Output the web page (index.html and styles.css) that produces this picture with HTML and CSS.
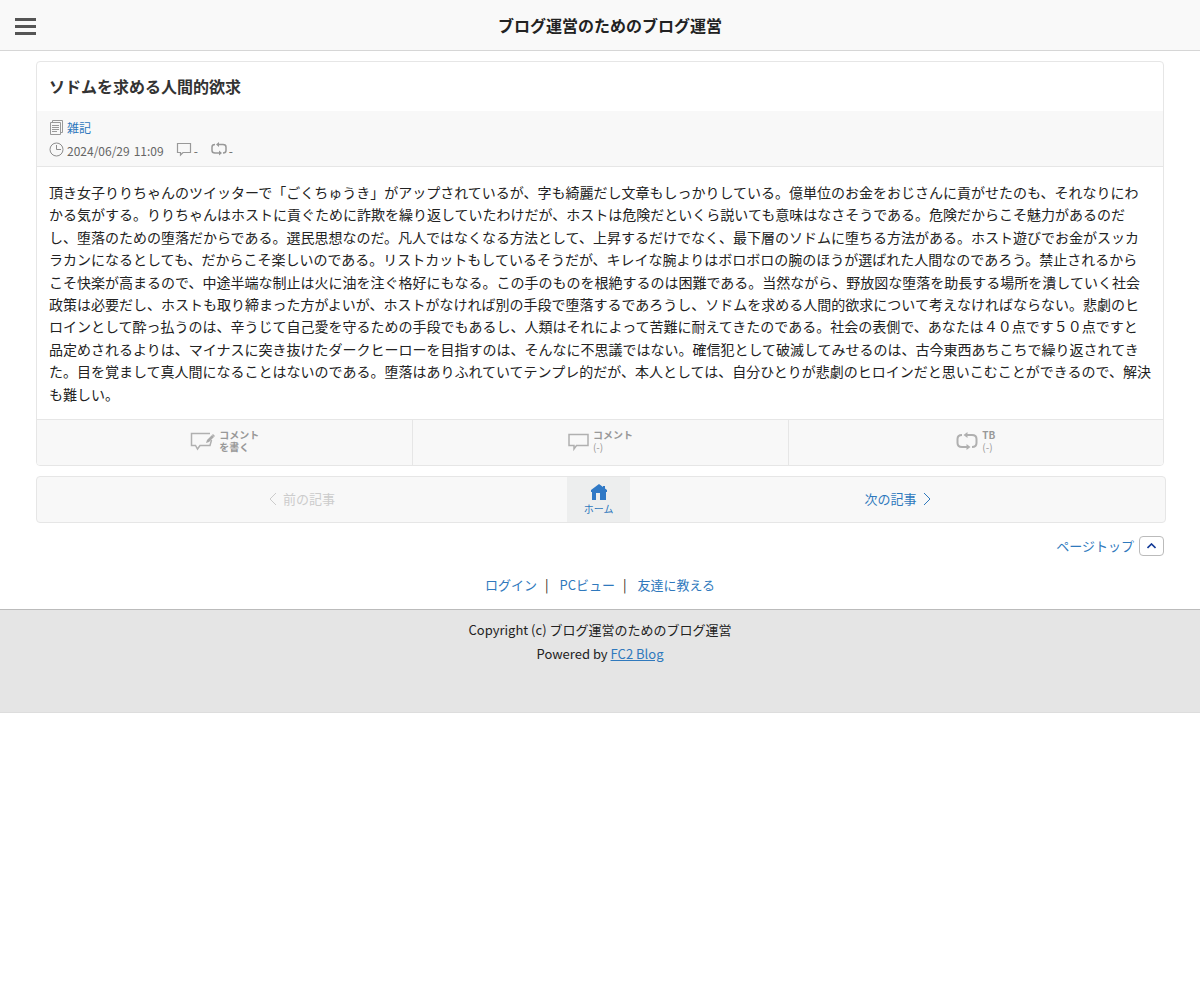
FILE: index.html
```html
<!DOCTYPE html>
<html lang="ja">
<head>
<meta charset="utf-8">
<meta name="viewport" content="width=device-width, initial-scale=1">
<title>ソドムを求める人間的欲求</title>
<link rel="stylesheet" href="styles.css">
</head>
<body id="top">
<header class="site-header">
  <button class="menu-button" type="button" aria-label="メニュー"><span></span><span></span><span></span></button>
  <h1 class="site-title">ブログ運営のためのブログ運営</h1>
</header>
<main class="main">
  <article class="entry">
    <h2 class="entry-title">ソドムを求める人間的欲求</h2>
    <div class="entry-meta">
      <div class="meta-row">
        <svg class="meta-icon" width="15" height="18" viewBox="0 0 15 18" fill="none" stroke="#999"><path d="M3.500 3.500V1.500H13.500V13.500H11.500M1.500 3.500H11.500V15.500H1.500ZM3 6.500H10M3 8.500H10M3 10.500H10M3 12.500H8"/></svg>
        <a href="#category">雑記</a>
      </div>
      <div class="meta-row">
        <svg class="meta-icon" width="15" height="18" viewBox="0 0 15 18" fill="none" stroke="#8c8c8c"><circle cx="7.500" cy="7.500" r="6.500"/><path d="M7.500 3V7.500H12"/></svg>
        <time class="date" datetime="2024-06-29T11:09"><span>2024/06/29</span> <span>11:09</span></time>
        <span class="meta-count"><svg width="16" height="18" viewBox="0 0 16 18" fill="none" stroke="#999" stroke-width="1.200"><path d="M1.500 1.500H14.500V10.500H7L4.500 13V10.500H1.500Z"/></svg>-</span>
        <span class="meta-count"><svg width="16" height="18" viewBox="0 0 16 18" fill="none" stroke="#999" stroke-width="1.500"><path d="M4 2.500Q1 2.500 1 5V8.500Q1 11 4 11H9M12 11Q15 11 15 8.500V5Q15 2.500 12 2.500H7"/><path d="M8 0V5L5 2.500ZM8 8.500V13.500L11 11Z" fill="#999" stroke="none"/></svg>-</span>
      </div>
    </div>
    <div class="entry-body">頂き女子りりちゃんのツイッターで「ごくちゅうき」がアップされているが、字も綺麗だし文章もしっかりしている。億単位のお金をおじさんに貢がせたのも、それなりにわかる気がする。りりちゃんはホストに貢ぐために詐欺を繰り返していたわけだが、ホストは危険だといくら説いても意味はなさそうである。危険だからこそ魅力があるのだし、堕落のための堕落だからである。選民思想なのだ。凡人ではなくなる方法として、上昇するだけでなく、最下層のソドムに堕ちる方法がある。ホスト遊びでお金がスッカラカンになるとしても、だからこそ楽しいのである。リストカットもしているそうだが、キレイな腕よりはボロボロの腕のほうが選ばれた人間なのであろう。禁止されるからこそ快楽が高まるので、中途半端な制止は火に油を注ぐ格好にもなる。この手のものを根絶するのは困難である。当然ながら、野放図な堕落を助長する場所を潰していく社会政策は必要だし、ホストも取り締まった方がよいが、ホストがなければ別の手段で堕落するであろうし、ソドムを求める人間的欲求について考えなければならない。悲劇のヒロインとして酔っ払うのは、辛うじて自己愛を守るための手段でもあるし、人類はそれによって苦難に耐えてきたのである。社会の表側で、あなたは４０点です５０点ですと品定めされるよりは、マイナスに突き抜けたダークヒーローを目指すのは、そんなに不思議ではない。確信犯として破滅してみせるのは、古今東西あちこちで繰り返されてきた。目を覚まして真人間になることはないのである。堕落はありふれていてテンプレ的だが、本人としては、自分ひとりが悲劇のヒロインだと思いこむことができるので、解決も難しい。</div>
    <div class="entry-actions">
      <a href="#comment-form"><svg width="25" height="22" viewBox="0 0 25 22" fill="none" stroke="#b0b0b0" stroke-width="1.500"><path d="M20 3.500H1.500V15.500H5.500L7.500 19L10 15.500H20L21.500 10"/><path d="M16 13L17 10L22 5L24 7L19 12Z" fill="#aaa" stroke="none"/><path d="M22.500 4.500L24.500 6.500"/></svg><span>コメント<br>を書く</span></a>
      <a href="#comments"><svg width="21" height="22" viewBox="0 0 21 22" fill="none" stroke="#b0b0b0" stroke-width="1.500"><path d="M1 4.500H20V15.500H8.500L6 19V15.500H1Z"/></svg><span>コメント<br><span class="count">(-)</span></span></a>
      <a href="#trackbacks"><svg width="22" height="22" viewBox="0 0 22 22" fill="none" stroke="#b0b0b0" stroke-width="2"><path d="M6 5Q1.500 5 1.500 9V13Q1.500 17 6 17H12M16 17Q20.500 17 20.500 13V9Q20.500 5 16 5H10"/><path d="M11.500 2V8L7.500 5ZM10.500 14V20L14.500 17Z" fill="#b0b0b0" stroke="none"/></svg><span>TB<br><span class="count">(-)</span></span></a>
    </div>
  </article>
  <nav class="pager" aria-label="記事">
    <span class="pager-side disabled"><svg width="8" height="14" viewBox="0 0 8 14" fill="none" stroke="currentColor"><path d="M7 1L1 7L7 13"/></svg>前の記事</span>
    <a class="pager-home" href="#home"><svg width="16" height="16" viewBox="0 0 16 16" fill="#3079c6"><path d="M8 0L0 6V8H1V16H5V9H9V16H15V8H16V6L14 4.500V2H12V3Z"/></svg>ホーム</a>
    <a class="pager-side" href="#next">次の記事<svg width="8" height="14" viewBox="0 0 8 14" fill="none" stroke="currentColor"><path d="M1 1L7 7L1 13"/></svg></a>
  </nav>
  <div class="page-top"><a href="#top">ページトップ<span class="page-top-box"><svg width="9" height="6" viewBox="0 0 9 6" fill="none" stroke="#123a96" stroke-width="1.600"><path d="M0.500 5L4.500 1L8.500 5"/></svg></span></a></div>
</main>
<nav class="links" aria-label="サイト"><a href="#login">ログイン</a><span>|</span><a href="#pc">PCビュー</a><span>|</span><a href="#share">友達に教える</a></nav>
<footer class="footer">
  <p>Copyright (c) ブログ運営のためのブログ運営</p>
  <p>Powered by <a href="#fc2">FC2 Blog</a></p>
</footer>
</body>
</html>
```
FILE: styles.css
```css
* { box-sizing: border-box; }
body {
  margin: 0;
  background: #fff;
  color: #222;
  font: 13px/24px "Noto Sans CJK JP", sans-serif;
}
a { color: #2f79bd; text-decoration: none; }
svg { flex: none; display: block; }
h1, h2, p { margin: 0; }

.site-header {
  display: grid;
  grid-template-columns: 52px 1fr 32px;
  align-items: center;
  height: 51px;
  background: #f9f9f9;
  border-bottom: 1px solid #d6d6d6;
}
.menu-button {
  display: grid;
  gap: 4px;
  width: 21px;
  margin: 2px 0 0 15px;
  padding: 0;
  border: 0;
  background: none;
}
.menu-button span { height: 3px; background: #555; }
.site-title { font-size: 16px; text-align: center; }

.main { margin: 10px 3% 0; }
.entry {
  border: 1px solid #e6e6e6;
  border-radius: 4px;
  overflow: hidden;
}
.entry-title {
  padding: 12px 12px 13px;
  color: #333;
  font-size: 16px;
  line-height: 24px;
}
.entry-meta {
  padding: 5px 12px 4px;
  background: #f8f8f8;
  border-bottom: 1px solid #e6e6e6;
  color: #666;
  font-size: 12px;
  line-height: 23px;
}
.meta-row { display: flex; align-items: center; gap: 3px; height: 23px; }
.date { display: flex; gap: 4px; }
.meta-count { display: flex; align-items: center; gap: 2px; margin-left: 9px; }
.meta-count + .meta-count { margin-left: 10px; }
.entry-body { padding: 14px 12px; font-size: 14px; line-height: 1.6; }

.entry-actions {
  display: grid;
  grid-template-columns: repeat(3, 1fr);
  background: #f8f8f8;
  border-top: 1px solid #e6e6e6;
}
.entry-actions a {
  display: flex;
  justify-content: center;
  align-items: center;
  gap: 4px;
  height: 45px;
  padding-bottom: 2px;
  color: #999;
  font-size: 10px;
  font-weight: bold;
  line-height: 12px;
}
.entry-actions a + a { border-left: 1px solid #e6e6e6; }
.count { font-weight: normal; }

.pager {
  display: grid;
  grid-template-columns: 47% 63px 1fr;
  height: 47px;
  margin: 10px -2px 0 0;
  background: #f8f8f8;
  border: 1px solid #e6e6e6;
  border-radius: 4px;
}
.pager-side { display: flex; justify-content: center; align-items: center; gap: 6px; }
.disabled { color: #ccc; }
.pager-home {
  display: flex;
  flex-direction: column;
  align-items: center;
  padding-top: 7px;
  background: #edeeee;
  font-size: 10px;
  line-height: 18px;
}

.page-top { display: flex; justify-content: flex-end; margin-top: 11px; }
.page-top a { display: flex; align-items: center; gap: 5px; }
.page-top-box {
  display: grid;
  place-items: center;
  width: 25px;
  height: 20px;
  border: 1px solid #bbb;
  border-radius: 4px;
}

.links { display: flex; justify-content: center; gap: 8px; margin-top: 15px; }
.links span { margin-right: 3px; }
.footer {
  min-height: 104px;
  margin-top: 12px;
  padding-top: 8px;
  background: #e5e5e5;
  border-top: 1px solid #bbb;
  border-bottom: 1px solid #ddd;
  text-align: center;
}
.footer a { text-decoration: underline; }
```
